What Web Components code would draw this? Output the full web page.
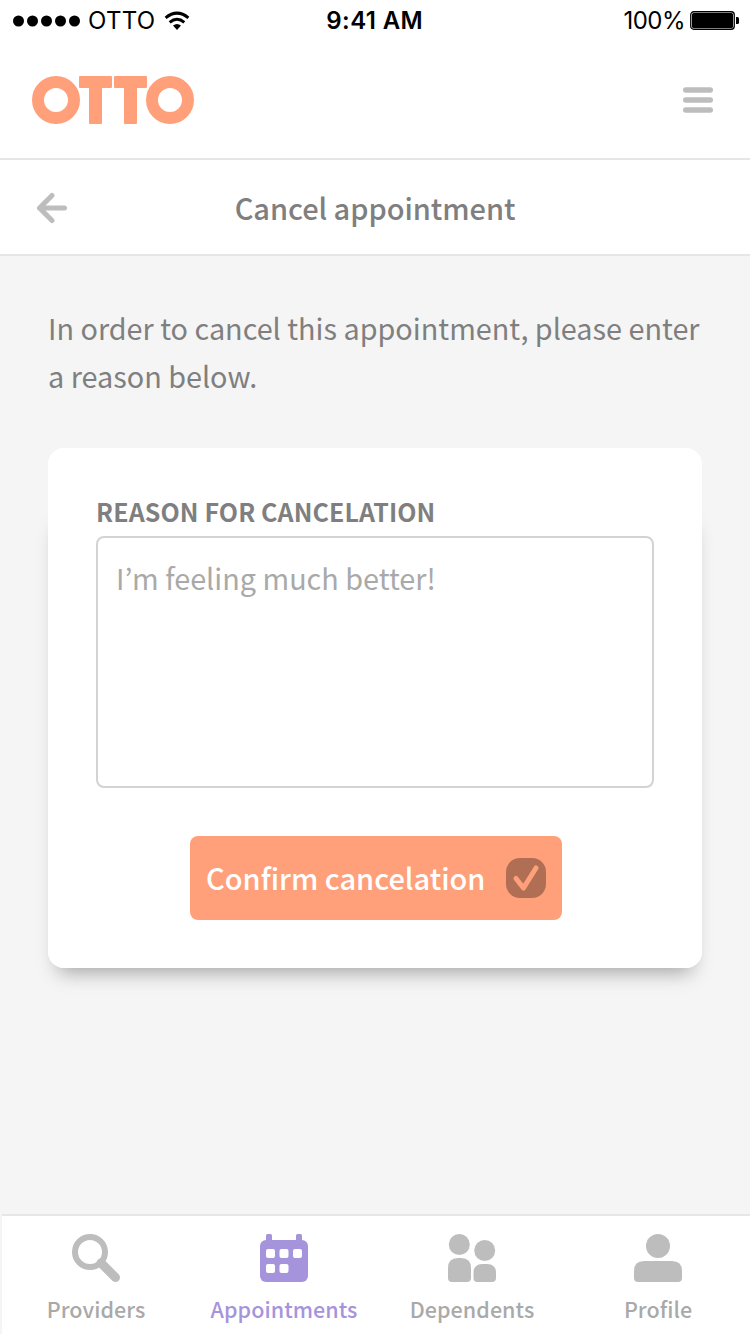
<!DOCTYPE html>
<html lang="en">
<head>
<meta charset="utf-8">
<title>Cancel appointment</title>
<style>
html, body { margin: 0; height: 100%; }
body { background: #f5f5f5; font-family: "Noto Sans CJK KR", "Noto Sans", sans-serif; color: #7f7f7f; overflow: hidden; }
</style>
</head>
<body>
<otto-app></otto-app>
<script>
const define = (name, html) => {
  const template = document.createElement('template');
  template.innerHTML = html;
  customElements.define(name, class extends HTMLElement {
    constructor() {
      super();
      this.attachShadow({ mode: 'open' }).append(template.content.cloneNode(true));
    }
  });
};

define('status-bar', `
<style>
:host { display: grid; grid-template-columns: 1fr auto 1fr; align-items: center; height: 40px; box-sizing: border-box; padding: 1px 11px 0 13px; background: #fff; color: #000; font: 400 24px/39px Inter, sans-serif; }
div { display: flex; align-items: center; }
svg { display: block; }
.carrier { margin-left: 8px; letter-spacing: 0.3px; }
.wifi { margin-left: 8px; }
.time { font-weight: 600; letter-spacing: 0.4px; padding-right: 2.500px; }
.right { justify-content: flex-end; gap: 5px; }
.pct { letter-spacing: -.5px; }
</style>
<div><svg width="67" height="12"><circle cx="5.5" cy="6" r="5.5"/><circle cx="19.5" cy="6" r="5.5"/><circle cx="33.5" cy="6" r="5.5"/><circle cx="47.5" cy="6" r="5.5"/><circle cx="61.5" cy="6" r="5.5"/></svg><span class="carrier">OTTO</span><svg class="wifi" width="28" height="20" viewBox="0 0 28 20"><g fill="none" stroke="#000" stroke-width="3"><path d="M2.6 6.8Q14 -2.5 25.400 6.800"/><path d="M6.700 11.300Q14 5.200 21.300 11.300"/></g><path d="M10 14.500Q14 11.500 18 14.500L14 19Z"/></svg></div>
<span class="time">9:41 AM</span>
<div class="right"><span class="pct">100%</span><svg width="49" height="20"><rect x=".75" y=".75" width="43.500" height="17.500" rx="3" fill="none" stroke="#000" stroke-width="1.300"/><rect x="2" y="2" width="41" height="15" rx="1.500"/><path d="M46 6h1.500q1.500 0 1.500 1.500v4q0 1.500-1.500 1.500H46z"/></svg></div>
`);

define('otto-logo', `
<style>:host { display: block; } svg { display: block; }</style>
<svg width="162" height="48" viewBox="0 0 162 48" role="img" aria-label="OTTO" fill="#ffa07a"><g fill="none" stroke="#ffa07a" stroke-width="12"><circle cx="24" cy="24" r="18"/><circle cx="138" cy="24" r="18"/></g><rect x="47" y="0" width="33" height="12" rx="1"/><rect x="57" y="2" width="13" height="46" rx="1"/><rect x="82" y="0" width="33" height="12" rx="1"/><rect x="92" y="2" width="13" height="46" rx="1"/></svg>
`);

define('app-header', `
<style>
:host { display: flex; justify-content: space-between; align-items: center; box-sizing: border-box; height: 120px; padding: 2px 37px 0 32px; border-bottom: 2px solid #e6e6e6; background: #fff; }
svg { display: block; }
</style>
<otto-logo></otto-logo>
<svg width="30" height="26" fill="#bdbdbd"><rect y=".25" width="30" height="5.500" rx="2.750"/><rect y="10.250" width="30" height="5.500" rx="2.750"/><rect y="20.250" width="30" height="5.500" rx="2.750"/></svg>
`);

define('title-bar', `
<style>
:host { display: grid; grid-template-columns: 68px 1fr 68px; align-items: center; box-sizing: border-box; height: 96px; padding-top: 2px; border-bottom: 2px solid #e6e6e6; background: #fff; }
svg { display: block; justify-self: end; }
h1 { margin: 0 0 2px; text-align: center; font-weight: 500; font-size: 29px; line-height: 44px; letter-spacing: -.05px; }
</style>
<svg width="32" height="32" viewBox="0 0 32 32" fill="none" stroke="#bdbdbd" stroke-width="5" stroke-linecap="round" stroke-linejoin="round"><path d="M16 3.500L3.500 16L16 28.500M3.500 16H28.500"/></svg>
<h1><slot></slot></h1>
`);

define('reason-card', `
<style>
:host { display: block; position: relative; z-index: 0; width: 654px; height: 520px; }
/* The shadow is cast by the lower part of the card only. */
:host::before { content: ""; position: absolute; z-index: -1; inset: 56px 0 0; border-radius: 16px; box-shadow: 0 14px 20px -10px rgba(0,0,0,.35); }
.body { display: flex; flex-direction: column; box-sizing: border-box; height: 100%; padding: 46px 48px 48px; border-radius: 16px; background: #fff; }
label { font-weight: 700; font-size: 25px; line-height: 34px; letter-spacing: .1px; height: 42px; }
.field { box-sizing: border-box; height: 252px; padding: 16px 18px; border: 2px solid #d3d3d3; border-radius: 8px; color: #a9a9a9; font-size: 28.800px; line-height: 48px; }
.action { margin-top: 48px; display: flex; justify-content: center; padding-left: 2px; }
</style>
<div class="body">
<label><slot name="label"></slot></label>
<div class="field"><slot name="value"></slot></div>
<div class="action"><slot name="action"></slot></div>
</div>
`);

define('confirm-button', `
<style>
:host { display: flex; align-items: center; justify-content: space-between; box-sizing: border-box; width: 372px; height: 84px; padding: 0 16px; border-radius: 8px; background: #ffa07a; color: #fff; font-weight: 500; font-size: 29px; line-height: 44px; }
span { margin-bottom: 2px; }
svg { display: block; }
</style>
<span><slot></slot></span>
<svg width="40" height="40" viewBox="0 0 40 40"><rect width="40" height="40" rx="14" fill="#b06f55"/><path d="M10 20.500L17.500 30L30 10" fill="none" stroke="#ffa07a" stroke-width="5" stroke-linecap="round" stroke-linejoin="round"/></svg>
`);

define('tab-item', `
<style>
:host { display: flex; flex-direction: column; align-items: center; padding-top: 18px; color: #a9a9a9; font-weight: 500; font-size: 21.500px; line-height: 32px; }
:host([active]) { color: #a594dc; }
.label { margin-top: 11px; letter-spacing: .05px; white-space: nowrap; }
::slotted(svg) { display: block; width: 48px; height: 48px; }
</style>
<slot name="icon"></slot><span class="label"><slot></slot></span>
`);

define('tab-bar', `
<style>:host { display: grid; grid-template-columns: 188px 188px 188px 184px; box-sizing: border-box; height: 120px; margin-left: 2px; border-top: 2px solid #e6e6e6; background: #fff; }</style>
<slot></slot>
`);

define('otto-app', `
<style>
:host { display: flex; flex-direction: column; width: 750px; height: 1334px; }
main { flex: 1; padding: 48px 48px 0; }
p { margin: 0 0 48px; font-size: 28.800px; line-height: 48px; white-space: nowrap; }
</style>
<status-bar></status-bar>
<app-header></app-header>
<title-bar>Cancel appointment</title-bar>
<main>
  <p>In order to cancel this appointment, please enter<br>a reason below.</p>
  <reason-card>
    <span slot="label">REASON FOR CANCELATION</span>
    <span slot="value">I’m feeling much better!</span>
    <confirm-button slot="action">Confirm cancelation</confirm-button>
  </reason-card>
</main>
<tab-bar>
  <tab-item><svg slot="icon" viewBox="0 0 48 48" fill="none" stroke="#bdbdbd"><circle cx="18" cy="18" r="15" stroke-width="6"/><path d="M29 29L43.500 43.500" stroke-width="9" stroke-linecap="round"/></svg>Providers</tab-item>
  <tab-item active><svg slot="icon" viewBox="0 0 48 48"><g fill="#a594dc"><rect y="6" width="48" height="42" rx="6"/><rect x="6" width="6" height="9" rx="1.500"/><rect x="36" width="6" height="9" rx="1.500"/></g><g fill="#fff"><rect x="6" y="15" width="9" height="9" rx="2"/><rect x="19.500" y="15" width="9" height="9" rx="2"/><rect x="33" y="15" width="9" height="9" rx="2"/><rect x="6" y="30" width="9" height="9" rx="2"/><rect x="19.500" y="30" width="9" height="9" rx="2"/></g></svg>Appointments</tab-item>
  <tab-item><svg slot="icon" viewBox="0 0 48 48" fill="#bdbdbd"><circle cx="11.300" cy="10.500" r="10.500"/><circle cx="36.700" cy="16.500" r="10.500"/><path d="M0 34Q0 24 10 24H13Q23 24 23 34V44Q23 48 19 48H4Q0 48 0 44ZM25.500 39Q25.500 30 34.500 30H39Q48 30 48 39V44Q48 48 44 48H29.500Q25.500 48 25.500 44Z"/></svg>Dependents</tab-item>
  <tab-item><svg slot="icon" viewBox="0 0 48 48" fill="#bdbdbd"><circle cx="24" cy="12" r="12"/><path d="M0 37Q0 27 10 27H38Q48 27 48 37V44Q48 48 44 48H4Q0 48 0 44Z"/></svg>Profile</tab-item>
</tab-bar>
`);
</script>
</body>
</html>
